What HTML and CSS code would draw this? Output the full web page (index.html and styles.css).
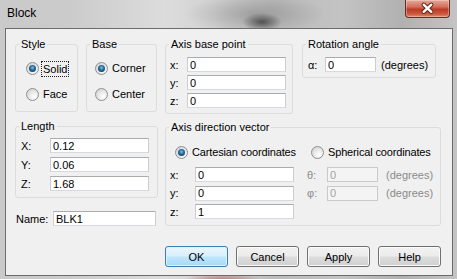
FILE: index.html
```html
<!DOCTYPE html>
<html lang="en">
<head>
    <meta charset="UTF-8">
    <title>Block</title>
    <link rel="stylesheet" href="styles.css">
</head>
<body>
    <div class="window">
        <div class="titlebar">
            <span class="title">Block</span>
            <button class="close" title="Close">
                <svg width="45" height="17" viewBox="0 0 45 17">
                    <path d="M18.5 4.5 L26.5 12 M26.5 4.5 L18.5 12" stroke="#5b2a22" stroke-width="4.5" stroke-linecap="round"/>
                    <path d="M18.5 4.5 L26.5 12 M26.5 4.5 L18.5 12" stroke="#fff" stroke-width="2.4" stroke-linecap="round"/>
                </svg>
            </button>
        </div>

        <div class="client">
            <div class="row-top">
                <fieldset class="group g-style">
                    <legend>Style</legend>
                    <div class="opts">
                        <label class="opt"><span class="radio on"></span><span class="focus">Solid</span></label>
                        <label class="opt"><span class="radio"></span>Face</label>
                    </div>
                </fieldset>
                <fieldset class="group g-base">
                    <legend>Base</legend>
                    <div class="opts">
                        <label class="opt"><span class="radio on"></span>Corner</label>
                        <label class="opt"><span class="radio"></span>Center</label>
                    </div>
                </fieldset>
                <fieldset class="group g-point">
                    <legend>Axis base point</legend>
                    <div class="pt-grid">
                        <span>x:</span><input class="edit" type="text" value="0">
                        <span>y:</span><input class="edit" type="text" value="0">
                        <span>z:</span><input class="edit" type="text" value="0">
                    </div>
                </fieldset>
                <fieldset class="group g-rot">
                    <legend>Rotation angle</legend>
                    <div class="rot-line">
                        <span class="lbl">α:</span>
                        <input class="edit short" type="text" value="0">
                        <span class="unit">(degrees)</span>
                    </div>
                </fieldset>
            </div>

            <div class="row-mid">
                <div class="col-left">
                    <fieldset class="group g-len">
                        <legend>Length</legend>
                        <div class="len-grid">
                            <span>X:</span><input class="edit" type="text" value="0.12">
                            <span>Y:</span><input class="edit" type="text" value="0.06">
                            <span>Z:</span><input class="edit" type="text" value="1.68">
                        </div>
                    </fieldset>
                    <div class="name-row">
                        <span class="name-lbl">Name:</span>
                        <input class="edit wide" type="text" value="BLK1">
                    </div>
                </div>

                <fieldset class="group g-dir">
                    <legend>Axis direction vector</legend>
                    <div class="modes">
                        <label class="opt cart"><span class="radio on"></span>Cartesian coordinates</label>
                        <label class="opt"><span class="radio"></span>Spherical coordinates</label>
                    </div>
                    <div class="dir-grid">
                        <span>x:</span><span><input class="edit" type="text" value="0"></span>
                        <span class="dim">θ:</span><span><input class="edit short off" type="text" value="0" disabled></span>
                        <span class="dim">(degrees)</span>

                        <span>y:</span><span><input class="edit" type="text" value="0"></span>
                        <span class="dim">φ:</span><span><input class="edit short off" type="text" value="0" disabled></span>
                        <span class="dim">(degrees)</span>

                        <span>z:</span><span><input class="edit" type="text" value="1"></span>
                        <span></span><span></span><span></span>
                    </div>
                </fieldset>
            </div>

            <div class="buttons">
                <button class="btn default">OK</button>
                <button class="btn">Cancel</button>
                <button class="btn">Apply</button>
                <button class="btn">Help</button>
            </div>
        </div>
    </div>
</body>
</html>
```

FILE: styles.css
```css
body {
    margin: 0;
    font: 11px "Liberation Sans", Arial, sans-serif;
    color: #000;
}
.window {
    width: 457px;
    height: 279px;
    display: flex;
    flex-direction: column;
    overflow: hidden;
    background:
        radial-gradient(ellipse 20px 9px at 262px 22px, rgba(50, 50, 50, 0.75), rgba(50, 50, 50, 0)),
        radial-gradient(ellipse 70px 20px at 255px 14px, rgba(90, 90, 90, 0.35), rgba(90, 90, 90, 0)),
        radial-gradient(ellipse 40px 8px at 222px 281px, rgba(175, 70, 70, 0.7), rgba(175, 70, 70, 0)),
        linear-gradient(90deg, #cacaca 0%, #cbcbcb 15%, #dcdcdc 36%, #d2d2d2 47%, #bcbcbc 60%, #c3c3c3 75%, #b1b1b1 88%, #c4c4c4 100%);
}
.titlebar {
    height: 28px;
    flex: none;
    display: flex;
    align-items: flex-start;
    padding-left: 7px;
}
.title {
    font-size: 12px;
    line-height: 15px;
    margin-top: 6px;
}
.close {
    margin-left: auto;
    margin-right: 7px;
    width: 45px;
    height: 18px;
    padding: 0;
    border: 1px solid #6a2d24;
    border-top: none;
    border-radius: 0 0 4px 4px;
    background: linear-gradient(#e6a899 0%, #d4705c 40%, #bd3b24 55%, #c9553a 80%, #dd8a6a 100%);
    box-shadow: inset 0 0 0 1px rgba(255, 255, 255, 0.3);
    display: flex;
    align-items: center;
    justify-content: center;
}
.client {
    flex: 1;
    margin: 0 4px 3px 5px;
    border: 1px solid #6c6c6c;
    background: #f0f0f0;
    padding: 9px 11px 0 9px;
}

/* group boxes */
.group {
    margin: 0;
    padding: 0;
    min-width: 0;
    box-sizing: border-box;
    border: 1px solid #dadcde;
    border-radius: 3px;
}
.group legend {
    padding: 0 2px;
    margin-left: 3px;
    line-height: 13px;
}
.row-top {
    display: flex;
    align-items: flex-start;
    gap: 8px;
}
.g-style { width: 63px; height: 74px; }
.g-base { width: 71px; height: 74px; }
.g-point { width: 128px; height: 76px; }
.g-rot { width: 134px; height: 40px; margin-left: 1px; }

.opts {
    display: flex;
    flex-direction: column;
    gap: 13px;
    padding: 11px 0 0 10px;
}
.g-base .opts { padding-left: 8px; }
.opt {
    display: flex;
    align-items: center;
    gap: 4px;
    height: 13px;
    line-height: 13px;
    white-space: nowrap;
}
.radio {
    width: 13px;
    height: 13px;
    box-sizing: border-box;
    flex: none;
    border-radius: 50%;
    border: 1px solid #8d8f91;
    background: radial-gradient(circle at 65% 70%, #ffffff 0, #e9e9e9 45%, #cbcbcb 100%);
    display: flex;
    align-items: center;
    justify-content: center;
}
.radio.on::after {
    content: "";
    width: 7px;
    height: 7px;
    border-radius: 50%;
    background: radial-gradient(circle at 50% 40%, #7fc6e8 0, #2a6f9e 40%, #0e3556 90%);
}
.focus {
    outline: 1px dotted #222;
    outline-offset: 1px;
    line-height: 12px;
}

/* edit fields */
.edit {
    box-sizing: border-box;
    width: 99px;
    height: 15px;
    margin: 0;
    padding: 0 2px;
    border: 1px solid;
    border-color: #a9abaf #cbcdd2 #d6d9de #cbcdd2;
    background: #fff;
    color: #000;
    font: inherit;
    line-height: 13px;
    display: block;
}
.edit.short { width: 51px; }
.edit.wide { width: 103px; }
.edit.off {
    background: #f4f4f4;
    border-color: #c9c9c9;
    color: #a3a3a3;
}
.dim { color: #8a8a8a; }

.pt-grid {
    display: grid;
    grid-template-columns: 17px 99px;
    row-gap: 3px;
    align-items: center;
    padding: 6px 0 0 4px;
}
.rot-line {
    display: flex;
    align-items: center;
    padding: 6px 0 0 5px;
}
.rot-line .lbl { width: 17px; }
.rot-line .unit { margin-left: 5px; }

/* lower part */
.row-mid {
    display: flex;
    align-items: flex-start;
    gap: 7px;
    margin-top: 6px;
}
.col-left { width: 143px; }
.g-len { width: 143px; height: 78px; }
.len-grid {
    display: grid;
    grid-template-columns: 29px 99px;
    row-gap: 4px;
    align-items: center;
    padding: 5px 0 0 5px;
}
.name-row {
    display: flex;
    align-items: center;
    margin: 13px 0 0 1px;
}
.name-lbl { width: 37px; }

.g-dir { width: 277px; height: 105px; margin-top: 1px; }
.modes {
    display: flex;
    padding: 12px 0 0 9px;
}
.modes .cart { width: 136px; }
.modes .opt { letter-spacing: -0.15px; }
.dir-grid {
    display: grid;
    grid-template-columns: 25px 112px 20px 59px auto;
    grid-template-rows: 15px 15px 15px;
    row-gap: 3.5px;
    align-items: center;
    margin-top: 8px;
    padding-left: 4px;
}

/* buttons */
.buttons {
    display: flex;
    justify-content: flex-end;
    gap: 8px;
    margin-top: 20px;
}
.btn {
    width: 63px;
    height: 21px;
    padding: 0;
    font: inherit;
    color: #000;
    border: 1px solid #707070;
    border-radius: 3px;
    background: linear-gradient(#f2f2f2 0%, #ebebeb 48%, #dddddd 52%, #cfcfcf 100%);
    box-shadow: inset 0 0 0 1px #fbfbfb;
}
.btn.default {
    border-color: #3c7fb1;
    background: linear-gradient(#eaf6fd 0%, #d9f0fc 48%, #bee6fd 52%, #a7d9f5 100%);
    box-shadow: inset 0 0 0 1px #dff2fc;
}
```
